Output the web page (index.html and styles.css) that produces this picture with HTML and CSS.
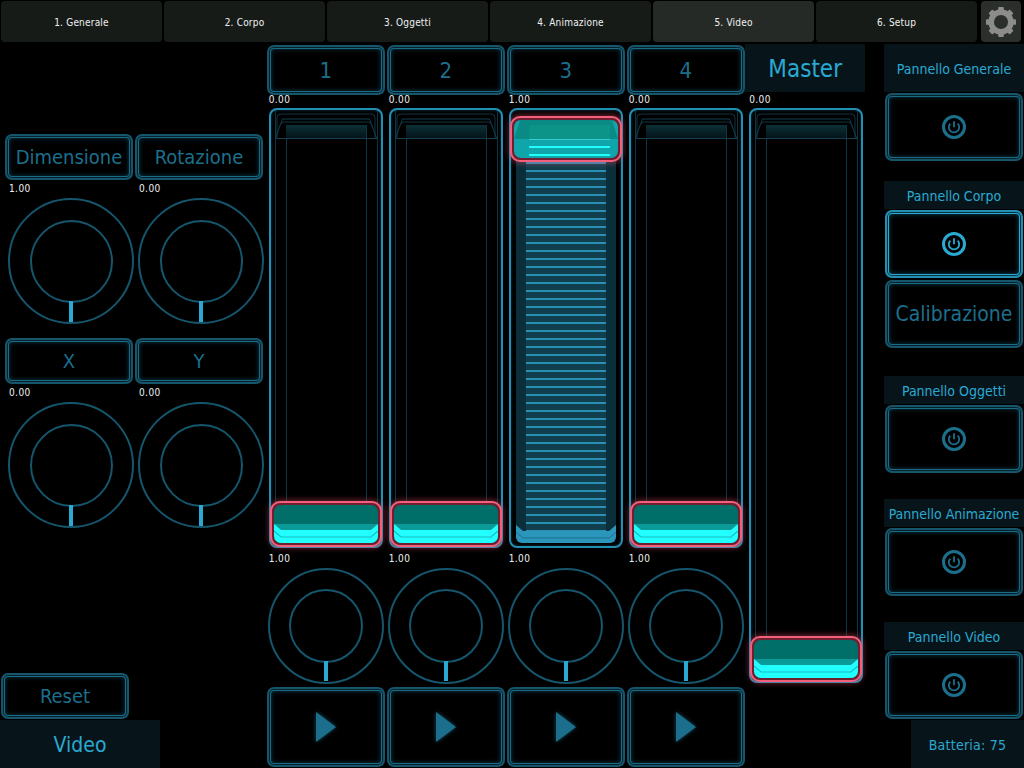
FILE: index.html
```html
<!DOCTYPE html>
<html lang="en">
<head>
    <meta charset="UTF-8">
    <title>Video</title>
    <link rel="stylesheet" href="styles.css">
</head>
<body>
    <svg class="defs" width="0" height="0">
        <linearGradient id="bevel-fade" x1="0" y1="0" x2="0" y2="1">
            <stop offset="0" stop-color="#0b3036"/>
            <stop offset="1" stop-color="#04141a"/>
        </linearGradient>
        <symbol id="power" viewBox="0 0 24 24">
            <circle cx="12" cy="12" r="10.5" fill="none" stroke="currentColor" stroke-width="3"/>
            <path d="M8.3 8.6a5.2 5.2 0 1 0 7.4 0" fill="none" stroke="currentColor" stroke-width="1.8"/>
            <path d="M12 6.2v6" fill="none" stroke="currentColor" stroke-width="1.8"/>
        </symbol>
        <symbol id="bevel-top" viewBox="0 0 110 32">
            <rect x="15" y="15" width="80" height="13" fill="url(#bevel-fade)"/>
            <path d="M6 28V8q0-4 4-4h90q4 0 4 4v20" fill="none" stroke="#0f3542"/>
            <path d="M4.500 28l7-19h87l7 19" fill="none" stroke="#124050"/>
            <path d="M8 16l4-4h86l4 4" fill="none" stroke="#0f3542"/>
            <path d="M4 28.500h102" stroke="#124050"/>
        </symbol>
        <symbol id="handle-low" viewBox="0 0 103 38" preserveAspectRatio="none">
            <rect width="103" height="38" fill="#006f69"/>
            <rect y="19" width="103" height="6" fill="#0a9a98"/>
            <path d="M0 19l7 6h89l7-6v19h-103z" fill="#22ffff"/>
            <path d="M0 26l7 6h89l7-6" fill="none" stroke="#14bcc6"/>
        </symbol>
        <symbol id="handle-high" viewBox="0 0 103 38" preserveAspectRatio="none">
            <rect width="103" height="38" fill="#10a5aa"/>
            <path d="M0 19l6-19h91l6 19z" fill="#0a8a84"/>
            <rect x="15" y="5" width="80" height="14" fill="#0c9488"/>
            <rect x="15" y="19" width="80" height="1" fill="#38ccd4"/>
            <rect x="15" y="26" width="80" height="2" fill="#22ffff"/>
            <rect x="15" y="34" width="80" height="2" fill="#22ffff"/>
        </symbol>
        <symbol id="bevel-blue" viewBox="0 0 100 18" preserveAspectRatio="none">
            <path d="M0 0l7 6h86l7-6v18h-100z" fill="#2a96bc"/>
            <path d="M0 7l7 6h86l7-6" fill="none" stroke="#1c6f8c"/>
        </symbol>
    </svg>

    <nav class="tabs">
        <div class="tab">1. Generale</div>
        <div class="tab">2. Corpo</div>
        <div class="tab">3. Oggetti</div>
        <div class="tab">4. Animazione</div>
        <div class="tab tab-active">5. Video</div>
        <div class="tab">6. Setup</div>
        <div class="gear-btn">
            <svg class="gear" viewBox="0 0 32 32">
                <g fill="#8c8c8a">
                    <rect x="13" y="0" width="6" height="32" rx="1"/>
                    <rect x="13" y="0" width="6" height="32" rx="1" transform="rotate(45 16 16)"/>
                    <rect x="13" y="0" width="6" height="32" rx="1" transform="rotate(90 16 16)"/>
                    <rect x="13" y="0" width="6" height="32" rx="1" transform="rotate(135 16 16)"/>
                </g>
                <circle cx="16" cy="16" r="10.5" fill="none" stroke="#8c8c8a" stroke-width="6"/>
                <circle cx="16" cy="16" r="7.5" fill="#2a2f2b"/>
            </svg>
        </div>
    </nav>

    <main class="workspace">
        <section class="left">
            <div class="left-grid">
                <div class="cell">
                    <div class="btn btn-left">Dimensione</div>
                    <div class="value value-left">1.00</div>
                    <div class="knob knob-big"><div class="knob-core"></div></div>
                </div>
                <div class="cell">
                    <div class="btn btn-left">Rotazione</div>
                    <div class="value value-left">0.00</div>
                    <div class="knob knob-big"><div class="knob-core"></div></div>
                </div>
                <div class="cell">
                    <div class="btn btn-left">X</div>
                    <div class="value value-left">0.00</div>
                    <div class="knob knob-big"><div class="knob-core"></div></div>
                </div>
                <div class="cell">
                    <div class="btn btn-left">Y</div>
                    <div class="value value-left">0.00</div>
                    <div class="knob knob-big"><div class="knob-core"></div></div>
                </div>
            </div>
            <div class="btn btn-reset">Reset</div>
            <div class="panel panel-video">Video</div>
        </section>

        <section class="channels">
            <div class="channel">
                <div class="btn btn-channel">1</div>
                <div class="value value-high">0.00</div>
                <div class="fader">
                    <svg class="bevel"><use href="#bevel-top"/></svg>
                    <div class="handle handle-bottom"><svg class="handle-art"><use href="#handle-low"/></svg></div>
                </div>
                <div class="value value-low">1.00</div>
                <div class="knob knob-small"><div class="knob-core"></div></div>
                <div class="btn btn-play"><div class="play"></div></div>
            </div>
            <div class="channel">
                <div class="btn btn-channel">2</div>
                <div class="value value-high">0.00</div>
                <div class="fader">
                    <svg class="bevel"><use href="#bevel-top"/></svg>
                    <div class="handle handle-bottom"><svg class="handle-art"><use href="#handle-low"/></svg></div>
                </div>
                <div class="value value-low">1.00</div>
                <div class="knob knob-small"><div class="knob-core"></div></div>
                <div class="btn btn-play"><div class="play"></div></div>
            </div>
            <div class="channel">
                <div class="btn btn-channel">3</div>
                <div class="value value-high">1.00</div>
                <div class="fader fader-full">
                    <svg class="bevel-blue"><use href="#bevel-blue"/></svg>
                    <div class="handle handle-top"><svg class="handle-art"><use href="#handle-high"/></svg></div>
                </div>
                <div class="value value-low">1.00</div>
                <div class="knob knob-small"><div class="knob-core"></div></div>
                <div class="btn btn-play"><div class="play"></div></div>
            </div>
            <div class="channel">
                <div class="btn btn-channel">4</div>
                <div class="value value-high">0.00</div>
                <div class="fader">
                    <svg class="bevel"><use href="#bevel-top"/></svg>
                    <div class="handle handle-bottom"><svg class="handle-art"><use href="#handle-low"/></svg></div>
                </div>
                <div class="value value-low">1.00</div>
                <div class="knob knob-small"><div class="knob-core"></div></div>
                <div class="btn btn-play"><div class="play"></div></div>
            </div>
        </section>

        <section class="master">
            <div class="panel panel-master">Master</div>
            <div class="value value-high">0.00</div>
            <div class="fader fader-master">
                <svg class="bevel"><use href="#bevel-top"/></svg>
                <div class="handle handle-bottom"><svg class="handle-art"><use href="#handle-low"/></svg></div>
            </div>
        </section>

        <aside class="right">
            <div class="panel panel-side panel-tall">Pannello Generale</div>
            <div class="btn btn-side"><svg class="power"><use href="#power"/></svg></div>

            <div class="panel panel-side group-corpo">Pannello Corpo</div>
            <div class="btn btn-side btn-on"><svg class="power"><use href="#power"/></svg></div>
            <div class="btn btn-side btn-calib">Calibrazione</div>

            <div class="panel panel-side group-oggetti">Pannello Oggetti</div>
            <div class="btn btn-side"><svg class="power"><use href="#power"/></svg></div>

            <div class="panel panel-side group-next">Pannello Animazione</div>
            <div class="btn btn-side"><svg class="power"><use href="#power"/></svg></div>

            <div class="panel panel-side group-next">Pannello Video</div>
            <div class="btn btn-side"><svg class="power"><use href="#power"/></svg></div>

            <div class="panel panel-battery">Batteria: 75</div>
        </aside>
    </main>
</body>
</html>
```

FILE: styles.css
```css
* {
    margin: 0;
    padding: 0;
    box-sizing: border-box;
    font-family: "DejaVu Sans Condensed", "DejaVu Sans", sans-serif;
}

body {
    width: 1024px;
    height: 768px;
    background-color: #000;
    overflow: hidden;
}

.defs {
    position: absolute;
}

/* Top tabs */
.tabs {
    display: flex;
    gap: 2px;
    height: 43px;
    padding: 1px 3px 1px 1px;
}

.tab {
    width: 161px;
    display: flex;
    align-items: center;
    justify-content: center;
    padding-top: 1px;
    border-radius: 4px;
    background-color: #161b18;
    color: #f0f0f0;
    font-size: 10px;
    letter-spacing: 0.2px;
}

.tab-active {
    background-color: #252a27;
}

.gear-btn {
    width: 40px;
    margin-left: 2px;
    display: flex;
    align-items: center;
    justify-content: center;
    border-radius: 4px;
    background-color: #2a2f2b;
}

.gear {
    width: 30px;
    height: 30px;
}

/* Main area */
.workspace {
    display: flex;
    height: 725px;
}

.btn {
    display: flex;
    align-items: center;
    justify-content: center;
    border: 2px solid #15566d;
    border-radius: 7px;
    box-shadow: inset 0 0 0 1px #052028, inset 0 0 0 2px #1a6b86, inset 0 0 5px 2px #0c3a4a;
    color: #1c6f8c;
}

.panel {
    display: flex;
    align-items: center;
    justify-content: center;
    padding-top: 2px;
    background-color: #07151a;
    color: #2aa9d2;
}

.value {
    height: 13px;
    padding-left: 2px;
    color: #f0f0f0;
    font-size: 10px;
    line-height: 13px;
    letter-spacing: 0.4px;
}

.value-high {
    line-height: 9px;
}

/* Knobs */
.knob {
    display: flex;
    align-items: center;
    justify-content: center;
    border: 2px solid #15566d;
    border-radius: 50%;
}

.knob-core {
    position: relative;
    border: 2px solid #15566d;
    border-radius: 50%;
}

.knob-core::after {
    content: "";
    position: absolute;
    left: 50%;
    top: 100%;
    width: 4px;
    margin-left: -2px;
    background-color: #2aa9d2;
}

.knob-big {
    width: 126px;
    height: 126px;
    margin-left: 3px;
}

.knob-big .knob-core {
    width: 83px;
    height: 83px;
}

.knob-big .knob-core::after {
    height: 21px;
}

.knob-small {
    width: 116px;
    height: 116px;
    margin: 3px 0 3px 1px;
}

.knob-small .knob-core {
    width: 74px;
    height: 74px;
}

.knob-small .knob-core::after {
    height: 20px;
}

/* Left column */
.left {
    width: 267px;
    display: flex;
    flex-direction: column;
}

.left-grid {
    display: grid;
    grid-template-columns: 128px 128px;
    column-gap: 2px;
    row-gap: 14px;
    margin: 91px 0 0 5px;
}

.btn-left {
    height: 46px;
    font-size: 20px;
}

.value-left {
    height: 18px;
    padding: 2px 0 0 4px;
}

.btn-reset {
    width: 128px;
    height: 46px;
    margin: auto 0 1px 1px;
    font-size: 20px;
}

.panel-video {
    width: 160px;
    height: 48px;
    font-size: 21px;
}

/* Channels */
.channels {
    width: 480px;
    display: grid;
    grid-template-columns: repeat(4, 118px);
    column-gap: 2px;
    padding-top: 2px;
}

.channel {
    display: flex;
    flex-direction: column;
}

.btn-channel {
    height: 50px;
    font-size: 22px;
}

.btn-play {
    height: 80px;
}

.play {
    width: 0;
    height: 0;
    border-left: 20px solid #1c6f8c;
    border-top: 15px solid transparent;
    border-bottom: 15px solid transparent;
    filter: drop-shadow(0 0 2px #124a5e);
}

.value-low {
    margin-top: 4px;
}

/* Faders */
.fader {
    position: relative;
    width: 114px;
    height: 440px;
    margin-left: 2px;
    border: 2px solid #2190b4;
    border-radius: 8px;
    background:
        linear-gradient(#0f3542, #0f3542) 4px 0 / 1px 100% no-repeat,
        linear-gradient(#0f3542, #0f3542) 15px 15px / 1px 100% no-repeat,
        linear-gradient(#0f3542, #0f3542) 95px 15px / 1px 100% no-repeat,
        linear-gradient(#0f3542, #0f3542) 106px 0 / 1px 100% no-repeat;
    box-shadow: inset 0 0 3px #0c3a4a;
}

.fader-master {
    height: 575px;
    margin-left: 3px;
}

.fader-full {
    background:
        repeating-linear-gradient(#2a8fb5 0 2px, #123f4d 2px 8px) 15px 44px / 80px 380px no-repeat,
        linear-gradient(#0b2f3a, #0b2f3a) 5px 44px / 100px 380px no-repeat;
}

.bevel {
    position: absolute;
    top: 0;
    left: 0;
    width: 110px;
    height: 32px;
}

.bevel-blue {
    position: absolute;
    left: 5px;
    bottom: 3px;
    width: 100px;
    height: 18px;
    border-radius: 0 0 6px 6px;
}

.handle {
    position: absolute;
    left: -1px;
    width: 112px;
    height: 46px;
    padding: 2px;
    border: 2px solid #f2607c;
    border-radius: 10px;
    background-color: #6e1f30;
    box-shadow: 0 0 5px 2px rgba(240, 80, 110, 0.35);
}

.handle-art {
    display: block;
    width: 100%;
    height: 100%;
    overflow: hidden;
    border-radius: 7px;
}

.handle-bottom {
    bottom: -1px;
}

.handle-top {
    top: 6px;
}

/* Master */
.master {
    width: 138px;
    padding-top: 1px;
}

.panel-master {
    width: 120px;
    height: 48px;
    margin-left: -1px;
    font-size: 24px;
}

.master .value {
    margin: 3px 0 0 1px;
}

/* Right column */
.right {
    width: 140px;
    display: flex;
    flex-direction: column;
    padding-top: 1px;
}

.panel-side {
    height: 28px;
    font-size: 14px;
}

.panel-tall {
    height: 48px;
}

.btn-side {
    width: 138px;
    height: 68px;
    margin: 1px 0 0 1px;
    color: #1c6f8c;
    font-size: 21px;
}

.btn-on {
    border-color: #2190b4;
    box-shadow: inset 0 0 0 1px #06303c, inset 0 0 0 2px #2aa9d2, inset 0 0 5px 2px #0f4a5e;
    color: #2aa9d2;
}

.btn-calib {
    margin-top: 2px;
}

.power {
    width: 24px;
    height: 24px;
}

.group-corpo {
    margin-top: 20px;
}

.group-oggetti {
    margin-top: 28px;
}

.group-next {
    margin-top: 26px;
}

.panel-battery {
    width: 113px;
    height: 48px;
    margin: 1px 0 0 27px;
    font-size: 14px;
    letter-spacing: 0.25px;
}
```
